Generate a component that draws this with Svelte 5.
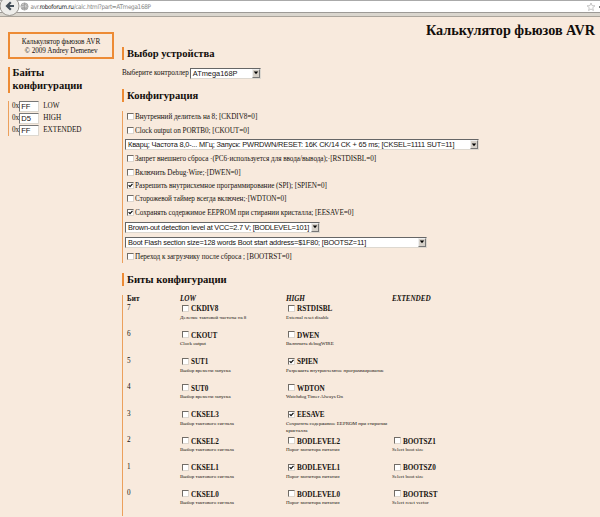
<script>
  const bytes = [['FF', 'LOW'], ['D5', 'HIGH'], ['FF', 'EXTENDED']];
  const options = [
    { h: 14, text: 'Внутренний делитель на 8; [CKDIV8=0]' },
    { h: 13, text: 'Clock output on PORTB0; [CKOUT=0]' },
    { select: true, h: 14, w: 354, text: 'Кварц; Частота 8,0-... МГц; Запуск: PWRDWN/RESET: 16K CK/14 CK + 65 ms; [CKSEL=1111 SUT=11]', ls: -0.18 },
    { h: 15.4, text: 'Запрет внешнего сброса ·(PC6·используется для ввода/вывода);·[RSTDISBL=0]' },
    { h: 13.2, text: 'Включить Debug·Wire;·[DWEN=0]' },
    { h: 13.2, on: true, text: 'Разрешить внутрисхемное программирование (SPI); [SPIEN=0]' },
    { h: 13.2, text: 'Сторожевой таймер всегда включен;·[WDTON=0]' },
    { h: 13.2, on: true, text: 'Сохранять содержимое EEPROM при стирании кристалла; [EESAVE=0]' },
    { select: true, h: 15, w: 195, text: 'Brown-out detection level at VCC=2.7 V; [BODLEVEL=101]', ls: -0.24 },
    { select: true, h: 15, w: 302, text: 'Boot Flash section size=128 words Boot start address=$1F80; [BOOTSZ=11]', ls: -0.2 },
    { h: 15.5, text: 'Переход к загрузчику после сброса ; [BOOTRST=0]' }
  ];
  const start = 'Выбор времени запуска';
  const clock = 'Выбор тактового сигнала';
  const bod = 'Порог монитора питания';
  const bits = [
    [7, ['CKDIV8', 'Деление тактовой частоты на 8'], ['RSTDISBL', 'External reset disable']],
    [6, ['CKOUT', 'Clock output'], ['DWEN', 'Включить debugWIRE']],
    [5, ['SUT1', start], ['SPIEN', 'Разрешить внутрисхемное программирование', true]],
    [4, ['SUT0', start], ['WDTON', 'Watchdog Timer Always On']],
    [3, ['CKSEL3', clock], ['EESAVE', 'Сохранять содержимое EEPROM при стирании кристалла', true]],
    [2, ['CKSEL2', clock], ['BODLEVEL2', bod], ['BOOTSZ1', 'Select boot size']],
    [1, ['CKSEL1', clock], ['BODLEVEL1', bod, true], ['BOOTSZ0', 'Select boot size']],
    [0, ['CKSEL0', clock], ['BODLEVEL0', bod], ['BOOTRST', 'Select reset vector']]
  ];
</script>

{#snippet check(on)}
  <span class="check" role="checkbox" aria-checked={!!on} tabindex="-1">
    {#if on}<svg viewBox="0 0 5 5"><path d="M.6 2.2 2 3.7 4.5.8" /></svg>{/if}
  </span>
{/snippet}

{#snippet dropdown(text, width, spacing)}
  <div class="select" style:width="{width}px" style:letter-spacing="{spacing}px">
    <span>{text}</span>
    <i><svg viewBox="0 0 6 4"><path d="M.8.5h4.4L3 3.2z" /></svg></i>
  </div>
{/snippet}

<div class="page">
  <header class="toolbar">
    <div class="address">
      <svg class="globe" viewBox="0 0 10 10"><circle cx="5" cy="5" r="4" /><path d="M1 4h3l1-2 2 1 1 2-2 2-2-1-2 1M5 1v8M2 7h6" /></svg>
      <span class="url">avr.<b>roboforum.ru</b>/calc.html?part=ATmega168P</span>
      <svg class="star" viewBox="0 0 12 12"><path d="m6 1.2 1.3 3.2 3.4.2-2.6 2.2.8 3.4L6 8.4l-2.9 1.8.8-3.4-2.6-2.2 3.4-.2z" /></svg>
      <span class="caret"></span>
    </div>
    <svg class="back" viewBox="0 0 20 20"><circle cx="9.5" cy="6" r="9.5" /><path d="M14 6H7m3.8-3.8L7 6l3.8 3.8" /></svg>
  </header>
  <h1>Калькулятор фьюзов AVR</h1>
  <div class="columns">
    <aside>
      <div class="about">Калькулятор фьюзов AVR<br />© 2009 Andrey Demenev</div>
      <h2>Байты<br />конфигурации</h2>
      <div class="bytes">
        {#each bytes as [value, name]}
          <div class="byte"><span>0x</span><div class="input">{value}</div><span class="name">{name}</span></div>
        {/each}
      </div>
    </aside>
    <main>
      <h2>Выбор устройства</h2>
      <div class="device"><span>Выберите контроллер</span>{@render dropdown('ATmega168P', 71, 0)}</div>
      <h2>Конфигурация</h2>
      <div class="config">
        {#each options as o}
          <div class="option" class:picker={o.select} style:height="{o.h}px">
            {#if o.select}{@render dropdown(o.text, o.w, o.ls)}{:else}{@render check(o.on)}<span>{o.text}</span>{/if}
          </div>
        {/each}
      </div>
      <h2>Биты конфигурации</h2>
      <div class="bits">
        <div class="row head"><b>Бит</b><em>LOW</em><em>HIGH</em><em>EXTENDED</em></div>
        {#each bits as [n, ...cells]}
          <div class="row">
            <span>{n}</span>
            {#each cells as [name, note, on]}
              <div class="bit">
                <div class="label">{@render check(on)}<b>{name}</b></div>
                <div class="note">{note}</div>
              </div>
            {/each}
          </div>
        {/each}
      </div>
    </main>
  </div>
</div>

<style>
  :global(body) { background: #f8eadd; overflow: hidden; }
  .page { width: 600px; height: 517px; overflow: hidden; background: #f8eadd; color: #17130f; font: 7.2px/9px "Liberation Serif", serif; white-space: nowrap; }
  .toolbar { position: relative; height: 17px; box-sizing: border-box; background: #dad6ce; border-bottom: 1px solid #aaa49b; }
  .address { display: flex; align-items: center; height: 13px; box-sizing: border-box; padding-left: 20px; background: #fff; border-top: 1px solid #aaa; border-bottom: 1px solid #9d9a96; }
  .globe { width: 9px; height: 9px; fill: #ccc; stroke: #999; stroke-width: .8; }
  .url { margin-left: 1.5px; font: 6.4px/10px "DejaVu Sans Condensed", "DejaVu Sans", sans-serif; font-stretch: condensed; color: #8a8a8a; letter-spacing: -.33px; }
  .url b { color: #222; font-weight: 400; }
  .star { width: 10px; height: 10px; margin-left: auto; fill: #fff; stroke: #aaa; stroke-width: .8; }
  .caret { width: 1px; height: 2px; margin-left: 3px; background: #777; }
  .back { position: absolute; left: 0; top: 0; width: 20px; height: 20px; clip-path: inset(0 0 3px 0); fill: #eeedea; stroke: #99958f; }
  .back path { fill: none; stroke: #444f59; stroke-width: 2.2; }
  h1, h2 { margin: 0; font-weight: 700; color: #120e0b; }
  h1 { height: 15px; padding: 5px 5px 0 0; text-align: right; font-size: 14.2px; line-height: 16px; }
  .columns { display: flex; }
  aside { width: 106px; margin-left: 8px; flex: none; }
  .about { height: 27px; margin-top: -5px; box-sizing: border-box; padding-top: 4px; border: 2px solid #ed8b35; text-align: center; line-height: 8.7px; letter-spacing: -.05px; }
  h2 { border-left: 2px solid #ed8b35; padding-left: 3px; font-size: 10.6px; line-height: 13px; height: 13px; }
  aside h2 { height: 26px; margin-top: 8px; padding-left: 2.5px; font-size: 10.5px; line-height: 12.8px; }
  .bytes { margin-top: 8px; border-left: 1px solid #eca05c; padding-left: 3px; }
  .byte { display: flex; align-items: center; height: 11.7px; }
  .input { width: 20px; height: 11px; box-sizing: border-box; background: #fff; border: 1px solid #ddd8d0; border-top-color: #777; border-left-color: #777; font: 7.6px/9px "Liberation Sans", sans-serif; padding-left: 1px; }
  .name { margin-left: 4px; }
  main { margin: 9.5px 0 0 8px; width: 470px; }
  .device { display: flex; align-items: center; height: 11px; margin: 8px 0 10px; gap: 1px; }
  .select { display: flex; justify-content: space-between; align-items: center; height: 11px; box-sizing: border-box; background: #fff; border: 1px solid #ddd8d0; border-top-color: #666; border-left-color: #666; padding-left: 2px; font: 7.4px/9px "Liberation Sans", sans-serif; }
  .select i { display: flex; align-items: center; justify-content: center; flex: none; width: 8px; height: 9px; box-sizing: border-box; background: #d5d0c8; border: 1px solid #eee; border-right-color: #777; border-bottom-color: #777; }
  .select svg { width: 6px; height: 4px; flex: none; }
  .config { height: 152px; box-sizing: border-box; margin: 9px 0 10px; padding-left: 4px; border-left: 1px solid #eca05c; letter-spacing: -.04px; }
  .option { display: flex; align-items: center; gap: 1px; }
  .picker { margin-left: -2px; }
  .check { display: block; flex: none; width: 7px; height: 7px; box-sizing: border-box; background: #fff; border: 1px solid #ddd6ce; border-top-color: #716c66; border-left-color: #716c66; }
  .option .check { margin-bottom: 2px; }
  .check svg { display: block; width: 5px; height: 5px; }
  .check path { fill: none; stroke: #111; stroke-width: 1.2; }
  .bits { margin-top: 9px; border-left: 1px solid #eca05c; padding-left: 4px; height: 221px; overflow: hidden; }
  .row { display: grid; grid-template-columns: 53px 106px 106px 106px; height: 26.55px; }
  .head { height: 9px; }
  .head em { font-weight: 700; letter-spacing: -.08px; }
  .label { display: flex; align-items: center; gap: 2px; padding: 1px 0 0 2px; height: 10px; }
  .label .check { margin-bottom: 3px; }
  .label b { letter-spacing: -.04px; }
  .note { width: 104px; font-size: 5px; line-height: 7px; white-space: normal; margin-top: -1px; }
</style>
